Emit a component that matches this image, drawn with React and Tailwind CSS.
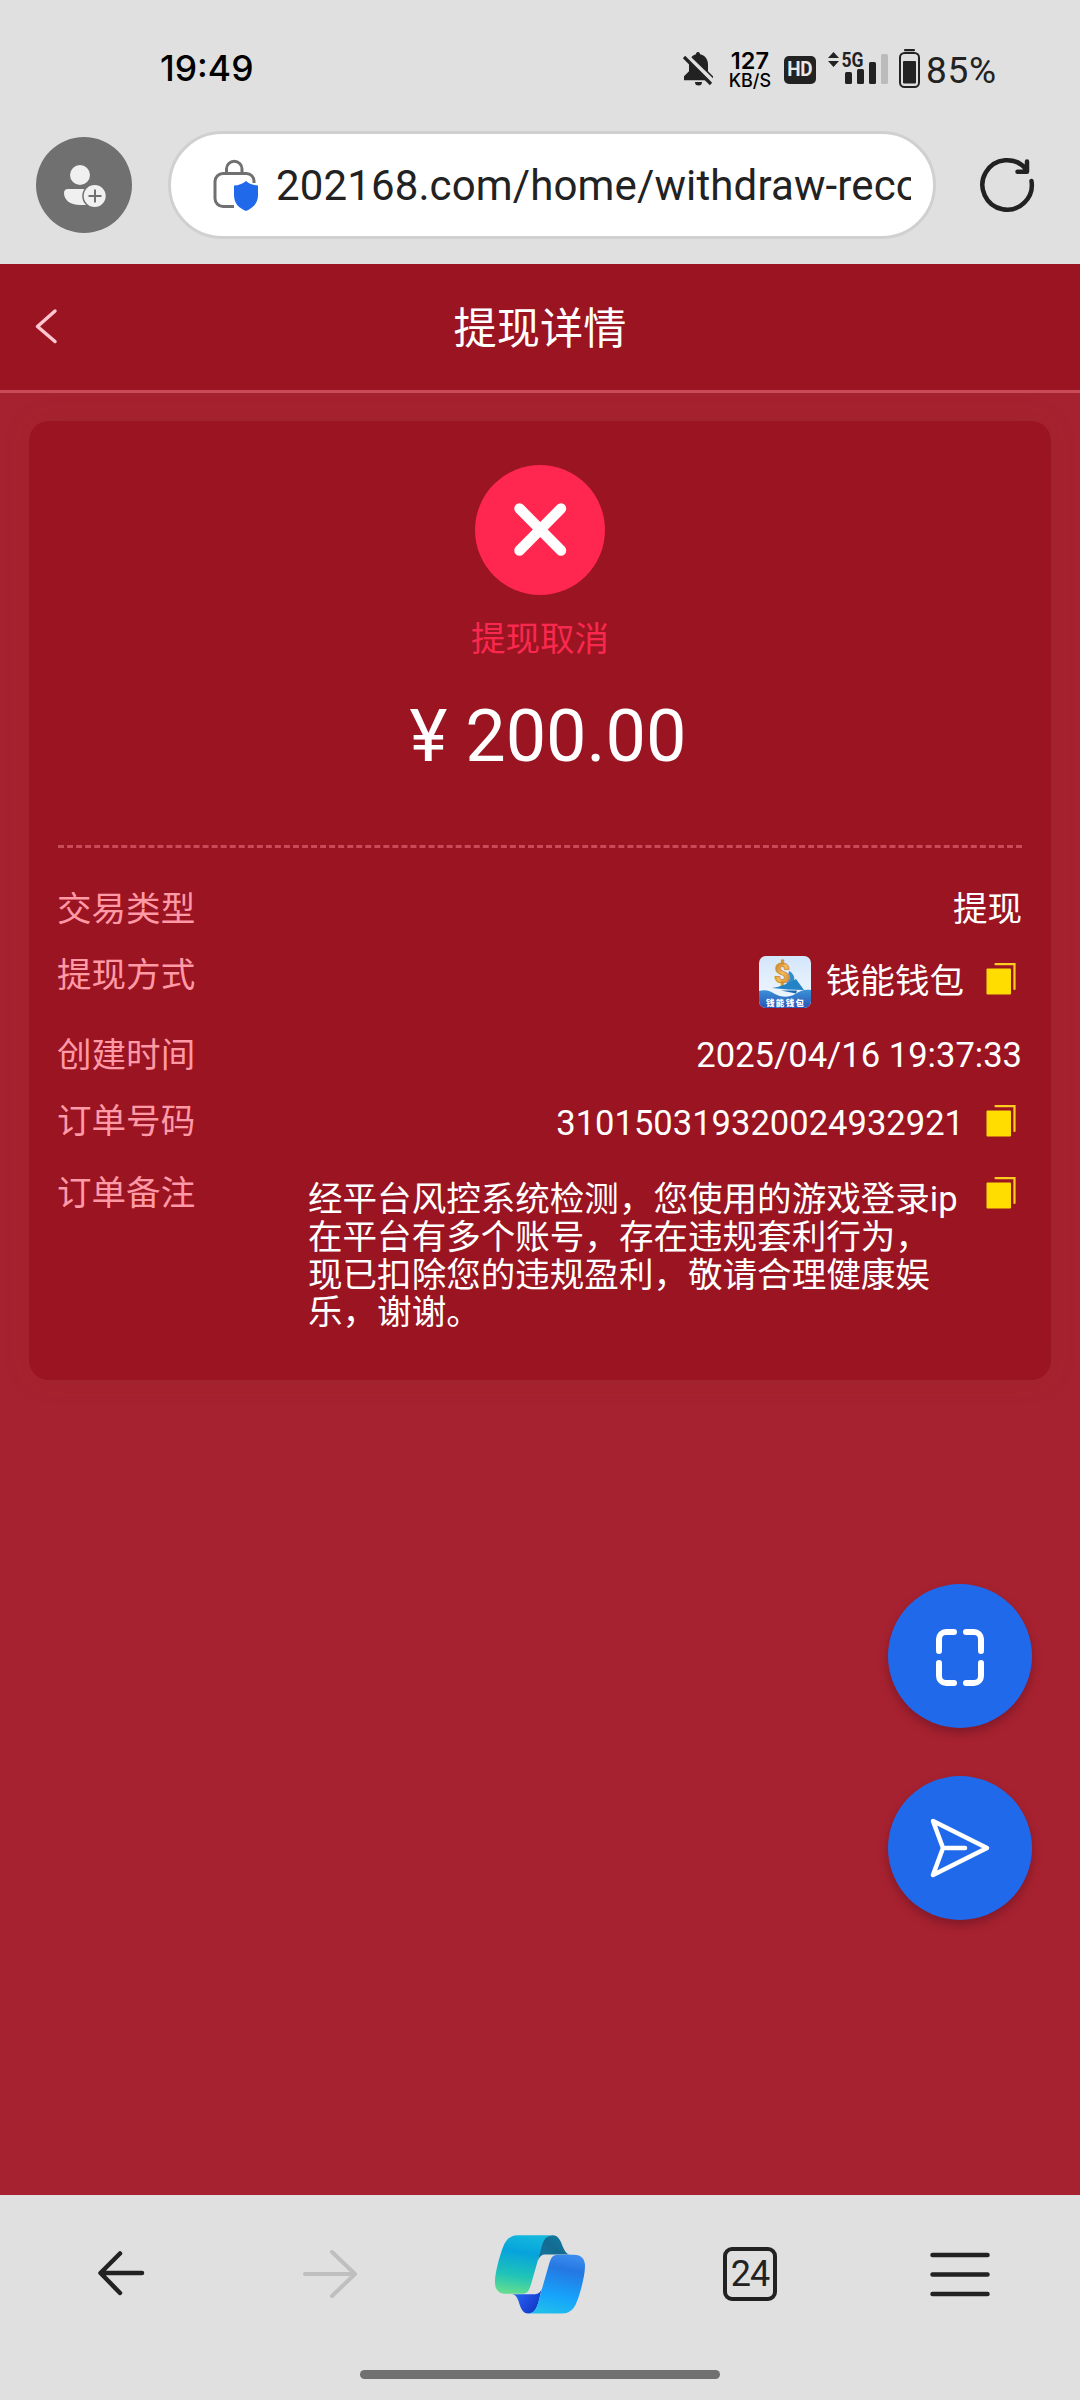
function StatusBar() {
  return (
    <div className="flex h-[112px] items-start justify-between pl-[160px] pr-[83px] text-[#222]">
      <span className="mt-[49px] font-[Inter,sans-serif] text-[35.500px] leading-[40px] font-medium text-black">19:49</span>
      <div className="mt-[48px] flex h-[42px] items-start">
        <svg width="32" height="42" viewBox="682 48 32 42">
          <path d="M698 52c1.500 0 2 1 2 2.300 5 1.200 8 5 8 10v7l5 5v4h-29v-4l5-5v-7c0-5 3-8.800 7-10 0-1.300.500-2.300 2-2.300z" fill="#222" />
          <path d="M695 82h7a3.500 3.500 0 0 1-7 0z" fill="#222" />
          <path d="M686 55l28 27" stroke="#e0e0e0" strokeWidth="4" />
          <path d="M684 57l27 27" stroke="#222" strokeWidth="3.200" />
        </svg>
        <div className="ml-[14px] mt-[2px] w-[44px] text-center font-[Inter,sans-serif] font-semibold text-black">
          <div className="text-[23.500px] leading-[22px]">127</div>
          <div className="text-[18px] leading-[17px] font-medium">KB/S</div>
        </div>
        <div className="ml-[12px] mt-[8px] flex h-7 w-8 items-center justify-center rounded-[5px] bg-[#222] font-[Roboto,sans-serif] text-[21px] font-bold tracking-tight text-[#e8e8e8]">
          <span className="scale-x-90">HD</span>
        </div>
        <svg className="ml-[8px]" width="68" height="42" viewBox="824 48 68 42" fill="#222">
          <path d="M833.500 52l5.500 6h-11zM833.500 67l5.500-6h-11z" />
          <text x="841.500" y="67" fontSize="20" fontWeight="700" fontFamily="Roboto, sans-serif" textLength="22" lengthAdjust="spacingAndGlyphs">5G</text>
          <rect x="845" y="72" width="7" height="12" rx="1.500" />
          <rect x="857" y="69" width="7" height="15" rx="1.500" />
          <rect x="869" y="62" width="7" height="22" rx="1.500" />
          <rect x="881" y="54" width="7" height="30" rx="1.500" fill="#bbb" />
        </svg>
        <svg className="ml-[6px]" width="24" height="42" viewBox="898 48 24 42" fill="#222">
          <rect x="904" y="49" width="11" height="2.200" rx="1" />
          <rect x="900" y="53" width="19" height="34" rx="4.500" fill="none" stroke="#222" strokeWidth="2" />
          <rect x="903" y="61" width="13" height="22.500" rx="1" />
        </svg>
        <span className="ml-[4px] mt-[3px] font-[Roboto,sans-serif] text-[37px] leading-[40px] tracking-[0.8px]">85%</span>
      </div>
    </div>
  );
}

function AddressBar() {
  return (
    <div className="flex h-[152px] items-start">
      <div className="ml-9 mt-[25px] size-24 rounded-full bg-[#707070]">
        <svg width="96" height="96" viewBox="36 137 96 96">
          <circle cx="80" cy="175" r="10" fill="#f0f0f0" />
          <path d="M68 189h22v16h-10c-10 0-16-5-16-12 0-2.500 1.500-4 4-4z" fill="#f0f0f0" />
          <circle cx="94.700" cy="196" r="12.500" fill="#707070" />
          <circle cx="94.700" cy="196" r="11" fill="#f0f0f0" />
          <path d="M88.500 196h13M95 189.500v13" stroke="#707070" strokeWidth="2" />
        </svg>
      </div>
      <div className="ml-9 mt-[19px] flex h-[108px] w-[768px] items-center rounded-full border-3 border-[#d0d0d0] bg-white pl-10">
        <svg className="shrink-0" width="50" height="56" viewBox="211 158 50 56" fill="none">
          <path d="M234 207.500h-11a8 8 0 0 1-8-8v-17a8 8 0 0 1 8-8h23.500a7.500 7.500 0 0 1 7.500 7.500v2M226.500 174v-4a7.500 7.500 0 0 1 15.500 0v4" stroke="#707070" strokeWidth="3" />
          <path d="M246 182c3.500 3 7.500 4.300 12 4.500v9.500c0 8-4.500 13-12 16-7.500-3-12-8-12-16v-9.500c4.500-.2 8.500-1.500 12-4.500z" fill="#2169eb" />
        </svg>
        <div className="ml-[15px] mt-[2px] w-[635px] overflow-hidden font-[Roboto,sans-serif] text-[42px] leading-[52px] tracking-[0.130px] whitespace-nowrap text-[#222]">
          202168.com/home/withdraw-record
        </div>
      </div>
      <svg className="ml-[41px] mt-[43px]" width="60" height="60" viewBox="978 155 60 60" fill="none" stroke="#222" strokeLinecap="round" strokeLinejoin="round" strokeWidth="4.500">
        <path d="M1032.500 181a24.700 24.700 0 1 1-5.500-12M1028 161.500v10.200h-9.500" />
      </svg>
    </div>
  );
}

function CopyIcon({ className }) {
  return (
    <svg className={className} width="30" height="32" viewBox="0 0 30 32">
      <rect x="0.500" y="5.500" width="24.500" height="26" rx="1" fill="#fd0" />
      <path d="M9.500 1.200H28.500V26" fill="none" stroke="#fc2" strokeWidth="2.200" strokeLinecap="round" />
    </svg>
  );
}

function WalletLogo() {
  return (
    <svg width="52" height="52" viewBox="0 0 52 52">
      <defs>
        <linearGradient id="sky" x1="0" y1="0" x2="0" y2="1">
          <stop offset="0" stopColor="#d3e6fb" />
          <stop offset="1" stopColor="#f6faff" />
        </linearGradient>
        <linearGradient id="sea" x1="0" y1="0" x2="0" y2="1">
          <stop offset="0" stopColor="#3b92d8" />
          <stop offset="1" stopColor="#2b55b5" />
        </linearGradient>
        <linearGradient id="gold" x1="0" y1="0" x2="1" y2="1">
          <stop offset="0" stopColor="#b8641c" />
          <stop offset="0.500" stopColor="#f3bd58" />
          <stop offset="1" stopColor="#c57a24" />
        </linearGradient>
        <clipPath id="tile">
          <rect width="52" height="52" rx="7" />
        </clipPath>
      </defs>
      <g clipPath="url(#tile)">
        <rect width="52" height="52" fill="url(#sky)" />
        <path d="M30 15c4 2 6 6 5 10l-8 5z" fill="#2f8fc9" />
        <text x="23" y="27" fontSize="28" fontWeight="900" textAnchor="middle" fill="url(#gold)" stroke="#d08a30" strokeWidth="0.800" fontFamily="Roboto, sans-serif">$</text>
        <path d="M13 32c7-1 16-4 24-9l8 11c-11 0-21-1-32-2z" fill="#2383c4" />
        <path d="M22 34.500h16l-1 3z" fill="#1b66ad" />
        <path d="M0 35c7-2 11 0 16 3s14 4 20 0 11-5 16-4v18H0z" fill="url(#sea)" />
        <text x="26" y="49.500" fontSize="8.500" fontWeight="900" textAnchor="middle" fill="#fff" fontFamily="Noto Sans CJK SC, sans-serif" textLength="38">钱能钱包</text>
      </g>
    </svg>
  );
}

function Row({ label, className, children }) {
  return (
    <div className={`flex items-start justify-between ${className}`}>
      <span className="-ml-px leading-[38px] text-[#ff99a6]">{label}</span>
      {children}
    </div>
  );
}

function DetailCard() {
  return (
    <div className="mx-[29px] mt-7 h-[959px] rounded-[20px] bg-[#9a1422] px-[29px] pt-11 text-[34.560px] text-white shadow-[0_0_26px_rgba(120,50,30,0.2)]">
      <div className="flex flex-col items-center">
        <svg width="130" height="130" viewBox="0 0 130 130">
          <circle cx="65" cy="65" r="65" fill="#ff264f" />
          <path d="M44.500 43.500l41.500 42M86 43.500L44.500 85.500" stroke="#fff" strokeWidth="10.500" strokeLinecap="round" />
        </svg>
        <div className="mt-[25px] leading-[38px] text-[#f8284e]">提现取消</div>
        <div className="mt-[37px] ml-[16px] text-[72px] leading-[84px] whitespace-pre">¥ 200.00</div>
      </div>
      <div className="mt-[66px] border-t-3 border-dashed border-[#c94a58]" />

      <Row label="交易类型" className="mt-[42px] h-[66px]">
        <span className="leading-[38px]">提现</span>
      </Row>
      <Row label="提现方式" className="h-[80px]">
        <div className="flex items-start pr-[6px]">
          <WalletLogo />
          <span className="ml-[15px] mt-[6px] leading-[38px]">钱能钱包</span>
          <CopyIcon className="ml-[22px] mt-[7px]" />
        </div>
      </Row>
      <Row label="创建时间" className="h-[66px]">
        <span className="leading-[38px]">2025/04/16 19:37:33</span>
      </Row>
      <Row label="订单号码" className="h-[72px]">
        <div className="flex items-start pr-[6px]">
          <span className="mt-[2px] leading-[38px]">310150319320024932921</span>
          <CopyIcon className="ml-[22px] mt-[3px]" />
        </div>
      </Row>
      <Row label="订单备注" className="">
        <div className="flex items-start pr-[6px]">
          <p className="mt-[7px] w-[656px] leading-[37.800px] whitespace-nowrap">
            经平台风控系统检测，您使用的游戏登录ip
            <br />
            在平台有多个账号，存在违规套利行为，
            <br />
            现已扣除您的违规盈利，敬请合理健康娱
            <br />
            乐，谢谢。
          </p>
          <CopyIcon className="ml-[22px] mt-[3px]" />
        </div>
      </Row>
    </div>
  );
}

function FloatingButtons() {
  return (
    <div className="absolute top-[1584px] right-12 flex flex-col gap-12">
      <button className="size-36 rounded-full bg-[#2169eb] shadow-[0_5px_10px_rgba(60,10,30,0.35)]">
        <svg width="144" height="144" viewBox="888 1584 144 144" fill="none" stroke="#fff" strokeWidth="6" strokeLinecap="round">
          <path d="M954 1632h-8a7 7 0 0 0-7 7v12M966 1632h8a7 7 0 0 1 7 7v12M954 1683h-8a7 7 0 0 1-7-7v-13M966 1683h8a7 7 0 0 0 7-7v-13" />
        </svg>
      </button>
      <button className="size-36 rounded-full bg-[#2169eb] shadow-[0_5px_10px_rgba(60,10,30,0.35)]">
        <svg width="144" height="144" viewBox="888 1776 144 144" fill="none" stroke="#fff" strokeWidth="4.500" strokeLinecap="round" strokeLinejoin="round">
          <path d="M933 1821l54 27-54 27 10-27zM943 1848h22" />
        </svg>
      </button>
    </div>
  );
}

function CopilotLogo() {
  return (
    <svg width="90" height="79" viewBox="105 104 270 236">
      <defs>
        <linearGradient id="cpLeft" x1="0.550" y1="0" x2="0.400" y2="1">
          <stop offset="0" stopColor="#14b8dc" />
          <stop offset="0.300" stopColor="#06a3dc" />
          <stop offset="0.700" stopColor="#20c4b8" />
          <stop offset="1" stopColor="#62dc90" />
        </linearGradient>
        <linearGradient id="cpRight" x1="0.600" y1="0" x2="0.400" y2="1">
          <stop offset="0" stopColor="#3b8bee" />
          <stop offset="0.220" stopColor="#2577e2" />
          <stop offset="0.700" stopColor="#16a4fb" />
          <stop offset="1" stopColor="#20bdec" />
        </linearGradient>
        <linearGradient id="cpTop" x1="1" y1="0" x2="0" y2="1">
          <stop offset="0" stopColor="#1282ac" />
          <stop offset="0.500" stopColor="#146a90" />
          <stop offset="1" stopColor="#1578a4" />
        </linearGradient>
        <linearGradient id="cpBottom" x1="0" y1="0" x2="1" y2="0.600">
          <stop offset="0" stopColor="#1a78e8" />
          <stop offset="0.500" stopColor="#2152e4" />
          <stop offset="1" stopColor="#1038c4" />
        </linearGradient>
      </defs>
      <path d="M234 180C240 130 250 104 278 104c32 0 26 58 54 58h-76c-10 0-16 5-22 18z" fill="url(#cpTop)" />
      <path d="M155 281h70c10 0 16-5 20-16-10 44-14 74-40 74-32 0-22-58-50-58z" fill="url(#cpBottom)" />
      <path d="M172 104h104c-22 2-28 20-34 46l-28 98c-6 20-10 32-28 32h-48c-22 0-33-13-33-33 0-36 20-102 30-120 8-14 20-23 37-23z" fill="url(#cpLeft)" />
      <path d="M308 339H204c22-2 28-20 34-46l28-98c6-20 10-32 28-32h48c22 0 33 13 33 33 0 36-20 102-30 120-8 14-20 23-37 23z" fill="url(#cpRight)" />
    </svg>
  );
}

function BrowserToolbar() {
  return (
    <div className="flex h-[205px] flex-col bg-[#e0e0e0]">
      <div className="flex h-[158px] items-center pl-[96px]">
        <svg width="50" height="60" viewBox="96 2244 50 60" fill="none" stroke="#222" strokeWidth="4.500" strokeLinecap="round" strokeLinejoin="round">
          <path d="M120 2253.500l-19.500 19.500 19.500 20M101 2273h41" />
        </svg>
        <svg className="ml-[154px]" width="60" height="60" viewBox="300 2244 60 60" fill="none" stroke="#bfbfbf" strokeWidth="4" strokeLinecap="round" strokeLinejoin="round">
          <path d="M332 2252l23 22-23 22M305 2274h49" />
        </svg>
        <div className="ml-[135px]">
          <CopilotLogo />
        </div>
        <div className="ml-[138px] flex size-[54px] items-center justify-center rounded-[9px] border-4 border-[#222] font-[Roboto,sans-serif] text-[36px] leading-none tracking-[-1px] text-[#222]">
          24
        </div>
        <svg className="ml-[150px]" width="66" height="60" viewBox="927 2244 66 60" stroke="#222" strokeWidth="4.500" strokeLinecap="round">
          <path d="M932.500 2255h55M932.500 2274.500h55M932.500 2294h55" />
        </svg>
      </div>
      <div className="mx-auto mt-[17px] h-[9px] w-[360px] rounded-full bg-[#707070]" />
    </div>
  );
}

function App() {
  return (
    <div className="relative flex h-[2400px] w-[1080px] flex-col overflow-hidden bg-[#a72230] font-[Roboto,'Noto_Sans_CJK_SC',sans-serif]">
      <div className="h-[264px] bg-[#e0e0e0]">
        <StatusBar />
        <AddressBar />
      </div>

      <div className="flex h-[129px] items-center border-b-3 border-[#c94a58] bg-[#9a1422]">
        <svg className="ml-[34px]" width="26" height="38" viewBox="34 308 26 38" fill="none" stroke="#ffc6d0" strokeWidth="3.500" strokeLinecap="round" strokeLinejoin="round">
          <path d="M55 311l-17.500 15.500L55 341.500" />
        </svg>
        <h1 className="mt-[5px] mr-[60px] flex-1 text-center text-[43.200px] leading-[50px] text-white">提现详情</h1>
      </div>

      <div className="flex-1">
        <DetailCard />
      </div>

      <FloatingButtons />
      <BrowserToolbar />
    </div>
  );
}

export default App;
